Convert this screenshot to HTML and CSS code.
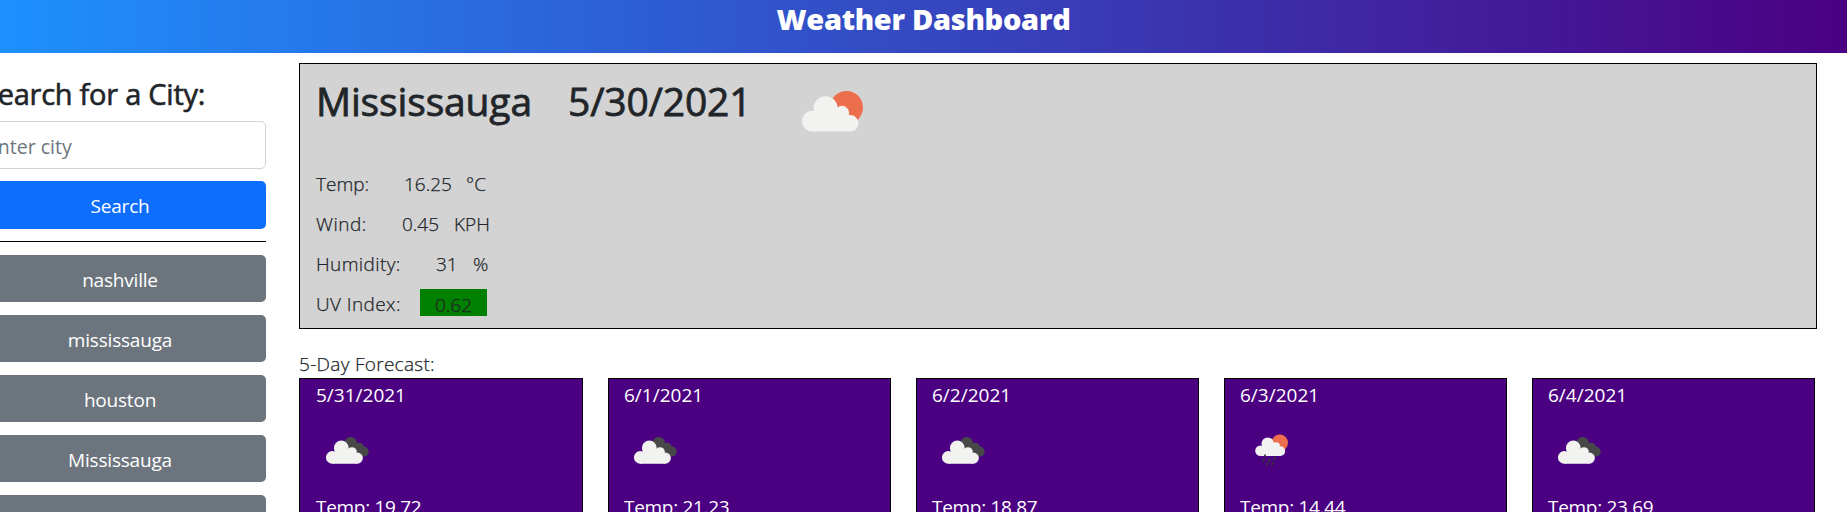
FILE: index.html
```html
<!DOCTYPE html>
<html lang="en">
<head>
<meta charset="utf-8">
<title>Weather Dashboard</title>
<link rel="stylesheet" href="styles.css">
</head>
<body>
<svg class="defs" width="0" height="0">
  <symbol id="cloudy" viewBox="0 0 70 50">
    <g fill="#484848"><circle cx="40.7" cy="18.3" r="6.3"/><circle cx="49.3" cy="22" r="4.3"/><circle cx="53.7" cy="26.6" r="5"/><path d="M40 15l10 6 3 10H40z"/></g>
    <g fill="#f2f2f0"><circle cx="31.3" cy="23" r="7.4"/><circle cx="22.2" cy="32.4" r="6.3"/><circle cx="42" cy="27" r="4.8"/><circle cx="47.3" cy="33.1" r="5.6"/><path d="M22.2 38.7V27h2l7-4 10 4 6 3v8.7z"/></g>
  </symbol>
  <symbol id="rain" viewBox="0 0 70 50">
    <circle cx="39.7" cy="17.8" r="8.3" fill="#ec6e4c"/>
    <g fill="#f2f2f2"><circle cx="27.7" cy="18.6" r="6.2"/><circle cx="20.5" cy="25.7" r="5.3"/><circle cx="36" cy="21.3" r="4"/><circle cx="40.3" cy="26.1" r="4.9"/><path d="M20.5 31V22l7-4 9 4 4 2v7z"/></g>
    <path d="M24 34.6l-.8 2M29.6 33.8l-.8 2M35 32.4l-.8 1.8M27.8 38l-.8 2M33 37.6l-.8 2M25 30v1.2" stroke="#33333d" stroke-width="1.7" stroke-linecap="round"/>
  </symbol>
</svg>
<header class="header"><h1 class="title">Weather Dashboard</h1></header>
<div class="layout">
  <aside class="sidebar">
    <h2 class="search-title">Search for a City:</h2>
    <input class="city-input" placeholder="Enter city">
    <button class="btn primary">Search</button>
    <hr class="rule">
    <div class="history">
      <button class="btn">nashville</button>
      <button class="btn">mississauga</button>
      <button class="btn">houston</button>
      <button class="btn">Mississauga</button>
      <button class="btn"></button>
    </div>
  </aside>
  <main class="main">
    <section class="current">
      <div class="current-head">
        <h2 class="city">Mississauga</h2>
        <h2 class="date">5/30/2021</h2>
        <svg class="icon-lg" viewBox="0 0 90 60">
          <circle cx="56.5" cy="27.5" r="16.5" fill="#ec6e4c"/>
          <g fill="#f2f2f0"><circle cx="35.6" cy="28.2" r="12"/><circle cx="22.3" cy="41.2" r="10.4"/><circle cx="52" cy="33" r="7.2"/><circle cx="60.2" cy="43.3" r="8.3"/><path d="M22.3 51.6V31h5l8-4 16 6 9 4v14.6z"/></g>
        </svg>
      </div>
      <p class="row"><span class="l-temp">Temp:</span><span class="v-temp">16.25</span><span>°C</span></p>
      <p class="row"><span class="l-wind">Wind:</span><span class="v-wind">0.45</span><span>KPH</span></p>
      <p class="row"><span class="l-hum">Humidity:</span><span class="v-hum">31</span><span>%</span></p>
      <p class="row"><span class="l-uv">UV Index:</span><span class="uv">0.62</span></p>
    </section>
    <p class="forecast-title">5-Day Forecast:</p>
    <section class="forecast">
      <article class="card"><p class="day">5/31/2021</p><svg class="icon"><use href="#cloudy"/></svg><p class="temp">Temp: 19.72</p></article>
      <article class="card"><p class="day">6/1/2021</p><svg class="icon"><use href="#cloudy"/></svg><p class="temp">Temp: 21.23</p></article>
      <article class="card"><p class="day">6/2/2021</p><svg class="icon"><use href="#cloudy"/></svg><p class="temp">Temp: 18.87</p></article>
      <article class="card"><p class="day">6/3/2021</p><svg class="icon icon-rain"><use href="#rain"/></svg><p class="temp">Temp: 14.44</p></article>
      <article class="card"><p class="day">6/4/2021</p><svg class="icon"><use href="#cloudy"/></svg><p class="temp">Temp: 23.69</p></article>
    </section>
  </main>
</div>
</body>
</html>
```
FILE: styles.css
```css
* { box-sizing: border-box; margin: 0; }
html, body { height: 512px; overflow: hidden; }
body {
  background: #fff;
  color: #212529;
  font: 400 19px/30px "Open Sans", "Noto Sans", sans-serif;
  letter-spacing: -0.3px;
}
.defs { display: block; }
.header {
  height: 53px;
  background: linear-gradient(to right, #1e90ff, #4b0082);
  text-align: center;
}
.title {
  color: #fff;
  font-size: 29px;
  font-weight: 800;
  line-height: 38px;
  letter-spacing: -0.3px;
}
.layout { display: flex; height: 459px; overflow: hidden; }
.sidebar {
  flex: none;
  width: 292px;
  margin-left: -26px;
  padding-top: 22px;
}
.search-title {
  padding-left: 8px;
  margin-bottom: 8px;
  font-size: 29px;
  font-weight: 400;
  line-height: 38px;
  letter-spacing: -0.25px;
  white-space: nowrap;
  -webkit-text-stroke: 0.6px currentColor;
}
.city-input {
  display: block;
  width: 100%;
  height: 48px;
  margin-bottom: 12px;
  padding: 8px 12px 6px;
  border: 1px solid #ced4da;
  border-radius: 5px;
  font: inherit;
  font-size: 19.5px;
  letter-spacing: 0;
}
.city-input::placeholder { color: #6c757d; }
.btn {
  display: block;
  width: 100%;
  height: 47px;
  padding: 2px 0 0;
  border: 0;
  border-radius: 5px;
  background: #6c757d;
  color: #fff;
  font: inherit;
  letter-spacing: -0.2px;
}
.btn.primary { height: 48px; background: #0d6efd; }
.rule { margin: 12px 0 13px; border: 0; border-top: 1px solid #000; }
.history { display: grid; gap: 13px; }
.main { flex: none; width: 1518px; margin: 10px 0 0 33px; }
.current {
  height: 266px;
  padding: 16px 16px 0;
  border: 1px solid #000;
  background: #d3d3d3;
}
.current-head { display: flex; height: 84px; }
.city, .date {
  margin-top: -3px;
  font-size: 39px;
  font-weight: 400;
  line-height: 48px;
  letter-spacing: -0.15px;
  -webkit-text-stroke: 0.8px currentColor;
}
.city { width: 252px; }
.date { width: 222px; }
.icon-lg { width: 90px; height: 60px; }
.row, .forecast-title { font-weight: 300; -webkit-text-stroke: 0.25px currentColor; }
.row { display: flex; height: 40px; align-items: center; letter-spacing: 0; }
.l-temp { width: 88px; }
.v-temp { width: 62px; }
.l-wind { width: 86px; letter-spacing: 0.5px; }
.v-wind { width: 52px; }
.l-hum { width: 120px; letter-spacing: 0.4px; }
.v-hum { width: 37px; }
.l-uv { width: 104px; letter-spacing: 0.4px; }
.uv { width: 67px; height: 27px; margin-bottom: 4px; padding-top: 1px; background: green; text-align: center; }
.forecast-title { padding: 20px 0 0 0; margin-bottom: -1px; letter-spacing: 0.3px; }
.forecast { display: grid; grid-template-columns: 284px repeat(4, 283px); column-gap: 25px; }
.card {
  height: 180px;
  padding: 1px 16px;
  border: 1px solid #000;
  background: #4b0082;
  color: #fff;
}
.card + .card { padding-left: 15px; }
.day { letter-spacing: 0; }
.icon { display: block; width: 70px; height: 50px; margin: 15px 0 17px -6px; }
.icon-rain { margin-left: 0; }
```
